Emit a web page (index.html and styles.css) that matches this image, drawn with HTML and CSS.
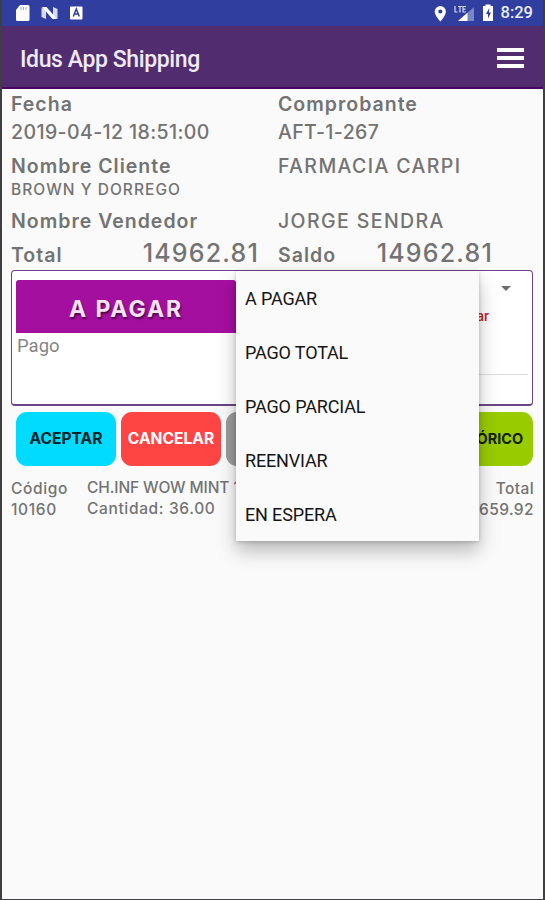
FILE: index.html
```html
<!DOCTYPE html>
<html lang="es">
<head>
<meta charset="utf-8">
<title>Idus App Shipping</title>
<link rel="stylesheet" href="styles.css">
</head>
<body>

<div class="app">
  <!-- Status bar -->
  <div class="status-bar">
    <svg class="status-left" width="70" height="16" viewBox="0 0 70 16">
      <path d="M5 0h8q1.500 0 1.500 1.500v13q0 1.500-1.500 1.500H2.500Q1 16 1 14.500V5z" fill="#fff"/>
      <path d="M6 2v3M8.500 2v3M11 2v3" stroke="#9aa6d6" stroke-width="1"/>
      <path d="M26.500 2.500L31 5v9l-4.500-2zM42.500 14L38 11V2l4.500 2z" fill="#d5daf0"/>
      <path d="M27 2h4.500l10.500 12h-4.500z" fill="#fff"/>
      <rect x="55" y="1.500" width="12.500" height="13" rx="1" fill="#fff"/>
      <path d="M58.300 11.500l3-7.500 3 7.500M59.300 9h4" fill="none" stroke="#303f9f" stroke-width="1.500"/>
    </svg>
    <div class="status-right">
      <svg width="60" height="20" viewBox="0 0 60 20">
        <path d="M6.300 3a5.600 5.600 0 0 0-5.600 5.600c0 4 5.600 10 5.600 10s5.600-6 5.600-10A5.600 5.600 0 0 0 6.300 3z" fill="#fff"/>
        <circle cx="6.300" cy="8.600" r="2" fill="#303f9f"/>
        <path d="M40 4v14H24z" fill="#7985c4"/>
        <path d="M33.500 9.800V18H24z" fill="#fff"/>
        <path d="M21 3v6h2.500M24 3.500h4M26 3.500v6M32 3.500h-3v5.500h3M29 6.200h2.500" fill="none" stroke="#d5daf0" stroke-width="1.200"/>
        <path d="M51.500 1.500h5v1.500h2.500v15H49V3h2.500z" fill="#fff"/>
        <path d="M55.300 5l-3.300 6h2v4.500l3-6h-2z" fill="#303f9f"/>
      </svg>
      <span class="clock">8:29</span>
    </div>
  </div>

  <!-- Toolbar -->
  <div class="toolbar">
    <h1 class="title">Idus App Shipping</h1>
    <div class="menu-icon"><i></i><i></i><i></i></div>
  </div>

  <div class="details">
    <div class="row row-label"><b>Fecha</b><b>Comprobante</b></div>
    <div class="row row-date"><span>2019-04-12 18:51:00</span><span>AFT-1-267</span></div>
    <div class="row row-client"><b>Nombre Cliente</b><span>FARMACIA CARPI</span></div>
    <div class="row row-address"><span>BROWN Y DORREGO</span></div>
    <div class="row row-seller"><b>Nombre Vendedor</b><span>JORGE SENDRA</span></div>
    <div class="row row-total">
      <div class="amount"><b>Total</b><span class="number">14962.81</span></div>
      <div class="amount saldo"><b>Saldo</b><span class="number">14962.81</span></div>
    </div>
  </div>

  <!-- Payment card -->
  <div class="card">
    <div class="pay">
      <div class="pay-title">A PAGAR</div>
      <div class="pay-label">Pago</div>
    </div>
    <div class="choice">
      <div class="arrow"></div>
      <div class="error">ar</div>
      <div class="line"></div>
    </div>

    <div class="dropdown">
      <div class="option">A PAGAR</div>
      <div class="option">PAGO TOTAL</div>
      <div class="option">PAGO PARCIAL</div>
      <div class="option">REENVIAR</div>
      <div class="option">EN ESPERA</div>
    </div>
  </div>

  <div class="buttons">
    <div class="btn accept">ACEPTAR</div>
    <div class="btn cancel">CANCELAR</div>
    <div class="btn gray"></div>
    <div class="btn history">HISTÓRICO</div>
  </div>

  <div class="item">
    <div class="code"><div>Código</div><div>10160</div></div>
    <div class="product"><div class="name">CH.INF WOW MINT 1</div><div>Cantidad: 36.00</div></div>
    <div class="sum"><div class="sum-label">Total</div><div>659.92</div></div>
  </div>
</div>

</body>
</html>
```
FILE: styles.css
```css
* {
  box-sizing: border-box;
}

body {
  margin: 0;
  background-color: #fafafa;
  font-family: Inter, "Open Sans", sans-serif;
  color: #737373;
}

.app {
  height: 900px;
  border: 2px solid #3f3f42;
  border-top: none;
  border-bottom-width: 1px;
  overflow: hidden;
}

.status-bar {
  height: 26px;
  padding: 0 10px 0 13px;
  background-color: #303f9f;
  display: flex;
  justify-content: space-between;
  align-items: center;
}

.status-right {
  display: flex;
  align-items: center;
  gap: 7px;
}

.clock {
  font: 500 16.5px/26px Roboto, sans-serif;
  color: #e8ebf8;
}

.toolbar {
  height: 63px;
  padding: 2px 19px 0 18px;
  background-color: #512d70;
  border-bottom: 2px solid #47055f;
  display: flex;
  justify-content: space-between;
  align-items: center;
}

.title {
  margin: 0;
  padding-top: 4px;
  font: 500 23px/30px Roboto, sans-serif;
  letter-spacing: -0.4px;
  color: #efeaf3;
}

.menu-icon {
  width: 27px;
  display: flex;
  flex-direction: column;
  gap: 4px;
}

.menu-icon i {
  height: 4px;
  background-color: #fff;
}

.details {
  padding-left: 9px;
}

.row {
  display: grid;
  grid-template-columns: 267px 1fr;
  align-items: center;
  font-size: 19.5px;
  white-space: nowrap;
}

.row b {
  font-weight: 600;
  letter-spacing: 1px;
}

.row span {
  font-weight: 500;
  letter-spacing: 1.4px;
}

.row-label { height: 30px; }
.row-date { height: 26px; }
.row-client { height: 32px; margin-top: 5px; }
.row-address { height: 16px; font-size: 15.5px; }
.row-seller { height: 30px; margin-top: 8px; }
.row-total { height: 34px; }

.row-date span {
  letter-spacing: 0.4px;
}

.row-address span {
  margin-top: -2px;
  letter-spacing: 1.05px;
}

.amount {
  width: 248px;
  display: flex;
  justify-content: space-between;
  align-items: baseline;
}

.saldo {
  width: 215px;
}

.row .number {
  font-size: 25px;
  letter-spacing: 1.2px;
}

.card {
  position: relative;
  height: 136px;
  margin: 0 10px 0 9px;
  padding: 9px 4px;
  background-color: #fff;
  border: 1px solid #6b4585;
  border-bottom-width: 2px;
  border-radius: 4px;
  display: flex;
}

.pay {
  width: 220px;
}

.pay-title {
  height: 53px;
  background-color: #a50fa0;
  border-radius: 3px 3px 0 0;
  color: #f3e3f4;
  font-size: 23px;
  font-weight: 700;
  letter-spacing: 1.9px;
  line-height: 58px;
  text-align: center;
  text-shadow: 1px 2px 2px #4b0849;
}

.pay-label {
  padding-left: 1px;
  font: 18.5px/27px Roboto, sans-serif;
  color: #858585;
}

.choice {
  flex: 1;
  display: flex;
  flex-direction: column;
  align-items: flex-end;
}

.arrow {
  margin: 6px 17px 0 0;
  border: 5px solid transparent;
  border-top-color: #6c6c6c;
  border-bottom: none;
}

.error {
  margin: 15px 39px 0 0;
  font: 500 14px/20px Roboto, sans-serif;
  color: #c4232b;
}

.line {
  width: 100%;
  height: 1px;
  margin-top: 48px;
  background-color: #dedede;
}

/* Opened list */
.dropdown {
  position: absolute;
  top: 0;
  left: 224px;
  z-index: 10;
  width: 243px;
  height: 270px;
  background-color: #fafafa;
  box-shadow: 0 10px 18px rgba(0,0,0,0.26), 0 1px 4px rgba(0,0,0,0.2);
}

.option {
  height: 54px;
  padding-left: 9px;
  font: 18px/55px Roboto, sans-serif;
  letter-spacing: -0.15px;
  color: #151515;
}

.buttons {
  margin: 6px 10px 0 14px;
  display: flex;
  gap: 5px;
}

.btn {
  width: 100px;
  height: 54px;
  border-radius: 11px;
  font-size: 15.6px;
  font-weight: 700;
  line-height: 53px;
  text-align: center;
}

.accept { background-color: #00dbff; color: #07252b; }
.cancel { background-color: #ff4444; color: #fff; }
.gray { background-color: #9b9b9b; flex: 1; }
.history { background-color: #99cc00; color: #142000; font-size: 14.5px; }

.item {
  padding: 11px 9px 0 9px;
  display: flex;
  font-size: 15.5px;
  font-weight: 500;
  letter-spacing: 0.65px;
  line-height: 21px;
  white-space: nowrap;
}

.code {
  width: 76px;
  padding-top: 1px;
}

.product {
  flex: 1;
}

.name {
  letter-spacing: -0.1px;
}

.sum {
  padding-top: 1px;
  letter-spacing: 0.4px;
  text-align: right;
}
```
